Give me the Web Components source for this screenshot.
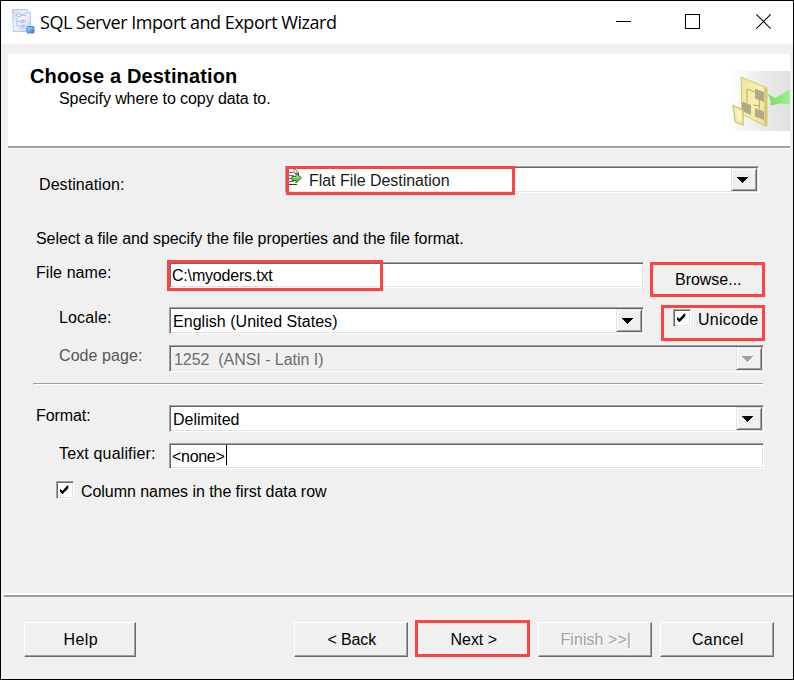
<!DOCTYPE html>
<html lang="en">
<head>
<meta charset="utf-8">
<title>SQL Server Import and Export Wizard</title>
<style>
html,body{margin:0;padding:0;width:794px;height:680px;overflow:hidden}
body{font:16px/18px "Liberation Sans",Arial,sans-serif;color:#000}
</style>
</head>
<body>
<wizard-window></wizard-window>
<script>
const define = (name, html, after) => customElements.define(name, class extends HTMLElement {
  constructor() {
    super();
    this.attachShadow({mode: 'open'}).innerHTML = html;
  }
  connectedCallback() { if (after) after(this, this.shadowRoot); }
});

/* One line of text, tracked so that it fills the width in its "w" attribute, less its side bearings. */
define('fit-text', `<style>:host{display:block;flex:none;white-space:pre;line-height:18px;box-sizing:border-box;padding:1px 0 0 1px}span{display:inline-block}</style><span><slot></slot></span>`,
  (el, root) => {
    const w = +el.getAttribute('w');
    const span = root.querySelector('span');
    if (!w) return;
    el.style.width = w + 'px';
    const n = el.textContent.length;
    const natural = span.getBoundingClientRect().width;
    span.style.letterSpacing = ((w - 2.5 - natural) / n).toFixed(4) + 'px';
  });

define('title-bar', `<style>
:host{display:flex;height:43px;background:#fff;box-sizing:border-box;padding-left:10px}
.ico{margin-top:7px;width:24px;height:26px;flex:none}
fit-text{font:18px/24px "Open Sans","Noto Sans",sans-serif;margin:8px 0 0 4px;}
.ctl{margin-left:auto;display:flex;gap:54px;padding:12px 22px 0 0}
.ctl svg:last-child{margin-left:2px}
</style>
<svg class="ico" viewBox="0 0 24 26">
<defs><linearGradient id="p" x1="0" x2="1" y1="0" y2="1"><stop offset="0" stop-color="#c5d6f2"/><stop offset=".45" stop-color="#f2f6fd"/><stop offset="1" stop-color="#bccfee"/></linearGradient>
<linearGradient id="b" x1="0" x2="1" y1="0" y2="1"><stop offset="0" stop-color="#a9dbfb"/><stop offset="1" stop-color="#2f78cf"/></linearGradient></defs>
<path d="M1.500 1.500H16l3.500 3.500V23.500H2.500z" fill="url(#p)" stroke="#b9c9e6"/>
<path d="M16 1.500V5h3.500" fill="#dce7f8" stroke="#b9c9e6"/>
<path d="M5 7c1-2 4-2 5 0s-4 3-5 0M9 7h3l3-2M6 10v8h4M6 13.500h3M10 12l4 1-4 2zM11 17l3 1-3 2zM12 7l3 1" fill="none" stroke="#a9b9dc"/>
<rect x="16" y="18.500" width="7" height="6.500" rx=".5" fill="url(#b)" stroke="#4d88c8"/>
</svg>
<fit-text w="299">SQL Server Import and Export Wizard</fit-text>
<div class="ctl">
<svg width="15" height="17" viewBox="0 0 15 17"><path d="M0 8.500H15" stroke="#000"/></svg>
<svg width="15" height="17" viewBox="0 0 15 17"><rect x=".5" y="1.500" width="14" height="14" fill="none" stroke="#000"/></svg>
<svg width="15" height="17" viewBox="0 0 15 17"><path d="M.3 1.300L14.700 15.700M14.700 1.300L.3 15.700" stroke="#000" stroke-width="1.100"/></svg>
</div>`);

define('page-header', `<style>
:host{display:flex;margin:10px 3px 0 7px;height:95px;box-sizing:border-box;background:#fff;border-bottom:1px solid #fff;box-shadow:inset 0 -2px #a0a0a0}
.t{padding:10px 0 0 21px}
.h{font-size:20px;font-weight:bold;line-height:22px}
.s{margin:2px 0 0 29px}
svg{margin:17px 0 0 auto}
</style>
<div class="t"><fit-text class="h" w="210">Choose a Destination</fit-text><fit-text class="s" w="214">Specify where to copy data to.</fit-text></div>
<svg width="60" height="60" viewBox="0 0 60 60">
<defs><linearGradient id="g"><stop offset="0" stop-color="#fff"/><stop offset=".5" stop-color="#ececec"/><stop offset="1" stop-color="#e0e0e0"/></linearGradient>
<linearGradient id="y" x1="0" x2="1" y1="0" y2="1"><stop offset="0" stop-color="#ede59a"/><stop offset=".5" stop-color="#f8f0ac"/><stop offset="1" stop-color="#e9dd87"/></linearGradient>
<linearGradient id="a"><stop offset="0" stop-color="#72dd63"/><stop offset="1" stop-color="#a3ee91"/></linearGradient></defs>
<rect width="60" height="60" fill="url(#g)"/>
<path d="M11 6L37 17V55L34 54.500 12 43z" fill="url(#y)" stroke="#d2c673" stroke-width="1"/>
<path d="M35.500 17V54" stroke="#cfc26e" stroke-width="2"/>
<path d="M17 32V18l8 3M29.500 29v9M23 34l7 1" fill="none" stroke="#b5ad77"/>
<path d="M25 17.500l9 3.500V31l-9-3.500zM12 30.500l9 3.500V44l-9-4zM25 37l9 3.500V49l-9-3.500z" fill="#b0aa88"/>
<path d="M3 34.500l10 4.500V54L5 50.500z" fill="#f6eea6" stroke="#cfc26e" stroke-width="1.300"/>
<path d="M7 38l4 2v9l-3-2z" fill="#fdf9c4"/>
<path d="M38 23l7 4L60 18.500V33.500l-9-1-11 2 1-4z" fill="url(#a)"/>
</svg>`);

/* Sunken box shared by the text fields and drop-down lists. */
const sunken = `box-sizing:border-box;border:1px solid;border-color:#a0a0a0 #fff #fff #a0a0a0;box-shadow:inset 1px 1px #696969,inset -1px -1px #e3e3e3;background:#fff;`;

define('text-field', `<style>
:host{display:flex;flex:none;height:26px;padding-left:2px;${sunken}}
</style><slot></slot>`);

define('combo-box', `<style>
:host{display:flex;flex:none;height:27px;padding:1px 1px 1px 3px;${sunken}}
:host([disabled]){background:#f0f0f0;color:#6d6d6d}
.btn{margin-left:auto;width:26px;height:23px;box-sizing:border-box;background:#f0f0f0;border:1px solid;border-color:#e3e3e3 #696969 #696969 #e3e3e3;box-shadow:inset 1px 1px #fff,inset -1px -1px #a0a0a0}
svg{display:block}.w{fill:none}
:host([disabled]) .k{fill:#a0a0a0}:host([disabled]) .w{fill:#fff}
</style><slot></slot>
<div class="btn"><svg width="24" height="21" viewBox="0 0 24 21" shape-rendering="crispEdges"><path class="w" d="M6 9h11l-5.500 6z"/><path class="k" d="M5 8h11l-5.500 6z"/></svg></div>`);

define('check-box', `<style>
:host{display:flex;align-items:flex-start}
.b{width:18px;height:18px;flex:none;${sunken}}
svg{display:block}
slot{display:block;margin:1px 0 0 6px}
</style><div class="b"><svg width="16" height="16" viewBox="0 0 16 16"><path d="M3 7L5.500 8.700 10.300 3.500H11.300V6.200L5.700 12H5.200L3 9.800z" fill="#000"/></svg></div><slot></slot>`);

define('push-button', `<style>
:host{display:flex;justify-content:center;flex:none;width:114px;height:35px;box-sizing:border-box;padding:7px 0 0 2px;background:#f0f0f0;border:1px solid;border-color:#fff #696969 #696969 #fff;box-shadow:inset -1px -1px #a0a0a0}
:host([disabled]){color:#a0a0a0;text-shadow:1px 1px #fff}
:host([flat]){border-color:transparent;box-shadow:none}
</style><slot></slot>`);

/* Red outline laid over a part of the window. */
define('mark-box', `<style>:host{position:absolute;box-sizing:border-box;border:3px solid #ff4343;pointer-events:none}</style>`,
  el => {
    const [x, y, w, h] = el.getAttribute('at').split(' ');
    Object.assign(el.style, {left: x + 'px', top: y + 'px', width: w + 'px', height: h + 'px'});
  });

define('form-page', `<style>
:host{display:block;padding-top:17px;height:427px;box-sizing:border-box}
.row{display:flex;align-items:flex-start}
.l{box-sizing:border-box;flex:none}
hr{margin:11px 30px 0 32px;border:0;height:1px;background:#a0a0a0;border-bottom:1px solid #fff;border-left:1px solid #a0a0a0}
.c{width:1px;height:20px;background:#000;margin-top:1px}
</style>
<div class="row" style="height:27px">
 <div class="l" style="width:284px;padding:9px 0 0 37px"><fit-text w="88">Destination:</fit-text></div>
 <combo-box style="width:474px">
  <svg width="16" height="18" viewBox="0 0 16 18" style="margin-left:-2px">
   <path d="M0 1H7L11 5V17H0z" fill="#fff"/><path d="M7 0V5h5z" fill="#fff" stroke="#6f7482"/>
   <path d="M11.500 5v3M0 16.500H10" stroke="#343b55"/><path d="M1 4.500H6M1 7.500H7M1 10.500H6M1 13.500H7" stroke="#6f7482"/>
   <path d="M5 8.500H9V5L14.500 10 9 15V12.500H5z" fill="#70bd45" stroke="#2c7427"/><path d="M6 9.500h4V7.500l3 3" fill="none" stroke="#b3e790"/>
  </svg>
  <fit-text w="143" style="margin:3px 0 0 5px;color:#1a1a1a">Flat File Destination</fit-text>
 </combo-box>
</div>
<div class="row" style="margin:36px 0 0 34px;height:18px"><fit-text w="430">Select a file and specify the file properties and the file format.</fit-text></div>
<div class="row" style="margin-top:15px;height:35px">
 <div class="l" style="width:168px;padding:1px 0 0 34px"><fit-text w="78">File name:</fit-text></div>
 <text-field style="width:475px"><fit-text w="103" style="margin-top:3px;margin-left:-1px">C:&#92;myoders.txt</fit-text></text-field>
 <push-button flat style="width:115px;margin-left:6px"><fit-text w="69">Browse...</fit-text></push-button>
</div>
<div class="row" style="margin-top:10px;height:27px">
 <div class="l" style="width:168px;padding:1px 0 0 57px"><fit-text w="55">Locale:</fit-text></div>
 <combo-box style="width:475px"><fit-text w="167" style="margin:3px 0 0 -1px">English (United States)</fit-text></combo-box>
 <check-box style="margin:2px 0 0 29px"><fit-text w="63">Unicode</fit-text></check-box>
</div>
<div class="row" style="margin-top:11px;height:27px">
 <div class="l" style="width:168px;padding:1px 0 0 57px;color:#555"><fit-text w="86">Code page:</fit-text></div>
 <combo-box disabled style="width:595px"><fit-text w="152" style="margin:3px 0 0 0">1252  (ANSI - Latin I)</fit-text></combo-box>
</div>
<hr>
<div class="row" style="margin-top:20px;height:27px">
 <div class="l" style="width:168px;padding:1px 0 0 34px"><fit-text w="57">Format:</fit-text></div>
 <combo-box style="width:595px"><fit-text w="69" style="margin:3px 0 0 -1px">Delimited</fit-text></combo-box>
</div>
<div class="row" style="margin-top:11px;height:26px">
 <div class="l" style="width:168px;padding:1px 0 0 57px"><fit-text w="99">Text qualifier:</fit-text></div>
 <text-field style="width:595px"><fit-text w="55" style="margin:3px 0 0 -1px">&lt;none&gt;</fit-text><div class="c"></div></text-field>
</div>
<div class="row" style="margin:12px 0 0 55px"><check-box><fit-text w="248">Column names in the first data row</fit-text></check-box></div>`);

define('wizard-footer', `<style>
:host{display:flex;margin-left:3px;box-sizing:border-box;height:86px;border-top:2px solid #a0a0a0;box-shadow:0 -2px #fff;padding:25px 19px 0 20px}
div{margin-left:auto;display:flex;gap:8px}
</style>
<push-button style="width:112px"><fit-text w="37">Help</fit-text></push-button>
<div>
<push-button><fit-text w="51">&lt; Back</fit-text></push-button>
<push-button><fit-text w="49">Next &gt;</fit-text></push-button>
<push-button disabled><fit-text w="73">Finish &gt;&gt;|</fit-text></push-button>
<push-button><fit-text w="54">Cancel</fit-text></push-button>
</div>`);

define('wizard-window', `<style>
:host{display:flex;flex-direction:column;position:relative;width:794px;height:680px;box-sizing:border-box;border:1px solid #000;background:#f0f0f0;overflow:hidden}
wizard-footer{margin-top:auto;flex:none;height:84px}
</style>
<title-bar></title-bar>
<page-header></page-header>
<form-page></form-page>
<wizard-footer></wizard-footer>
<mark-box at="285 165 229 29"></mark-box>
<mark-box at="166 259 216 31"></mark-box>
<mark-box at="649 261 115 35"></mark-box>
<mark-box at="660 304 104 36"></mark-box>
<mark-box at="414 619 115 37"></mark-box>`);
</script>
</body>
</html>
